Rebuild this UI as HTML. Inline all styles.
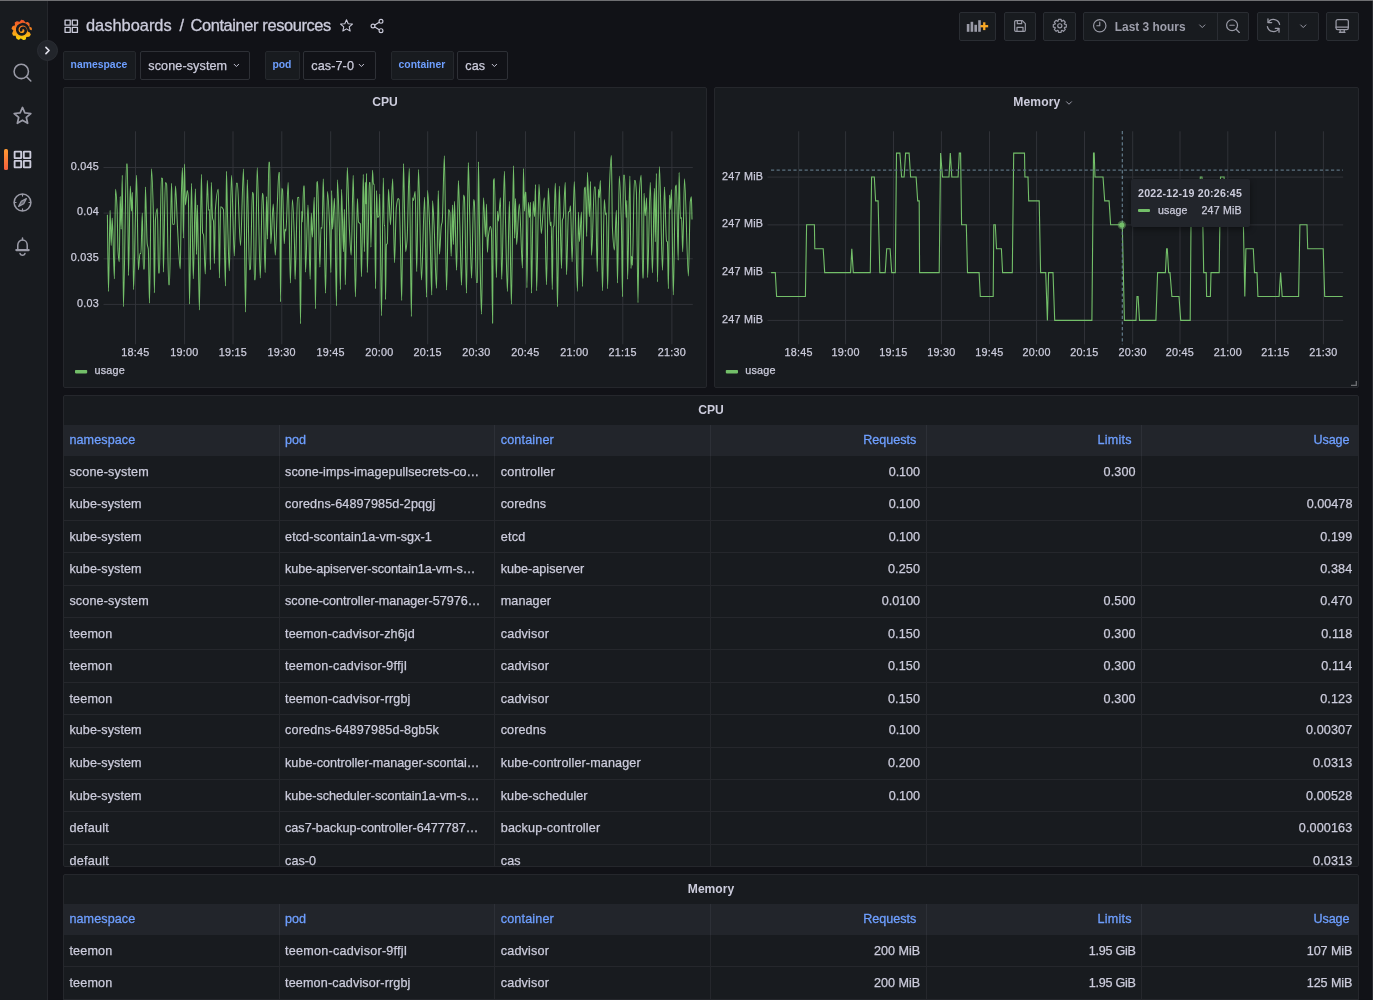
<!DOCTYPE html><html><head><meta charset="utf-8"><title>Container resources - Grafana</title><style>
*{box-sizing:border-box;margin:0;padding:0}
html,body{width:1373px;height:1000px;overflow:hidden;background:#111217;}
body{position:relative;font-family:"Liberation Sans",sans-serif;color:#ccccdc;font-size:12.6px;-webkit-font-smoothing:antialiased}
.abs{position:absolute}
.topline{position:absolute;left:0;top:0;width:1373px;height:1px;background:#6f6f72}
.side{position:absolute;left:0;top:1px;width:48px;height:999px;background:#181b1f;border-right:1px solid #25272c}
.scroll{position:absolute;left:1372px;top:1px;width:1px;height:999px;background:#2a2c31}
.panel{position:absolute;background:#181b1f;border:1px solid #25272c;border-radius:2px;overflow:hidden}
.ptitle{position:absolute;left:0;right:0;top:0;height:29px;line-height:28px;text-align:center;font-weight:700;font-size:12.1px;color:#ccccdc}
.btn{position:absolute;top:12px;height:29px;background:#181b1f;border:1px solid #2a2d33;border-radius:2px}
.vlabel{position:absolute;top:51px;height:29px;background:#181b1f;border:1px solid #25282d;border-radius:2px;color:#6e9fff;font-weight:700;font-size:10.4px;line-height:26px;text-align:center;padding-right:1.2px}
.vval{position:absolute;top:51px;height:29px;background:#111217;border:1px solid #2e3036;border-radius:2px;color:#ccccdc;font-size:12.6px;line-height:28px;padding-left:7.3px;white-space:nowrap;letter-spacing:0.1px;-webkit-text-stroke:0.25px #ccccdc}
.ax{position:absolute;font-size:10.8px;line-height:12px;color:#ccccdc;white-space:nowrap;letter-spacing:0.25px;-webkit-text-stroke:0.25px #ccccdc}
.th{position:absolute;top:0;height:31px;line-height:31px;color:#6e9fff;font-size:12.6px;white-space:nowrap;border-right:1px solid rgba(204,204,220,0.07);padding:0 6px 0 5.4px;letter-spacing:0.12px;-webkit-text-stroke:0.3px #6e9fff}
.td{position:absolute;top:0;height:32.4px;line-height:33.2px;font-size:12.6px;white-space:nowrap;border-right:1px solid #25272c;padding:0 5.6px 0 5.4px;overflow:hidden;letter-spacing:0.13px;-webkit-text-stroke:0.25px #ccccdc}
.tr{position:absolute;left:0;width:1294px;height:32.4px;border-bottom:1px solid #25272c}
.thead{position:absolute;left:0;width:1294px;height:31px;background:#22252b}
.r{text-align:right}
svg{position:absolute;overflow:visible}
</style></head><body>
<div id="root" style="position:absolute;left:0;top:0;width:1373px;height:1000px;will-change:transform">
<div class="topline"></div>
<div class="side"></div>
<div class="scroll"></div>
<svg style="left:11.4px;top:18.2px" width="21.6" height="23" viewBox="0 0 24 24" ><defs><linearGradient id="lg" x1="0" y1="0" x2="0" y2="1"><stop offset="0" stop-color="#f0542a"/><stop offset="0.5" stop-color="#f78b1f"/><stop offset="1" stop-color="#fcd20a"/></linearGradient></defs><path d="M11.69 2.00 L13.76 2.37 L15.73 5.24 L18.55 4.35 L19.90 5.96 L19.57 9.42 L22.30 10.55 L22.30 12.66 L19.82 15.10 L21.18 17.72 L19.83 19.33 L16.36 19.60 L15.72 22.49 L13.65 22.85 L10.82 20.83 L8.47 22.63 L6.65 21.58 L5.78 18.21 L2.83 18.08 L2.11 16.10 L3.61 12.96 L1.43 10.97 L2.15 8.99 L5.32 7.55 L4.93 4.62 L6.75 3.57 L10.10 4.50Z" fill="url(#lg)" stroke="url(#lg)" stroke-width="1.6" stroke-linejoin="round"/><path d="M22.4 14.2L19.7 13.2C19.8 8.6 15.8 5.6 12.2 6.1C8.7 6.6 6.4 9.8 7 13.1C7.5 16 10.3 17.9 13.1 17.3C15.4 16.8 16.8 14.6 16.3 12.5C15.9 10.8 14.2 9.8 12.7 10.3C11.6 10.6 10.9 11.8 11.3 12.9" fill="none" stroke="#181b1f" stroke-width="2.9" stroke-linecap="round" stroke-linejoin="round"/></svg><svg style="left:11.7px;top:62.099999999999994px" width="21" height="21" viewBox="0 0 24 24" ><circle cx="10.6" cy="10.8" r="8.2" fill="none" stroke="#9a9ba7" stroke-width="1.75"/><path d="M16.7 16.9L21.5 21.7" fill="none" stroke="#9a9ba7" stroke-width="1.75" stroke-linecap="round" stroke-linejoin="round"/></svg><svg style="left:11.7px;top:105.1px" width="21" height="21" viewBox="0 0 24 24" ><path d="M12.00 2.80 L14.70 9.08 L21.51 9.71 L16.37 14.22 L17.88 20.89 L12.00 17.40 L6.12 20.89 L7.63 14.22 L2.49 9.71 L9.30 9.08Z" fill="none" stroke="#9a9ba7" stroke-width="1.95" stroke-linecap="round" stroke-linejoin="round"/></svg><svg style="left:11.7px;top:149.1px" width="21" height="21" viewBox="0 0 24 24" ><rect x="3" y="3" width="7.5" height="7.5" rx="0.4" fill="none" stroke="#ccccdc" stroke-width="2.1"/><rect x="13.5" y="3" width="7.5" height="7.5" rx="0.4" fill="none" stroke="#ccccdc" stroke-width="2.1"/><rect x="3" y="13.5" width="7.5" height="7.5" rx="0.4" fill="none" stroke="#ccccdc" stroke-width="2.1"/><rect x="13.5" y="13.5" width="7.5" height="7.5" rx="0.4" fill="none" stroke="#ccccdc" stroke-width="2.1"/></svg><svg style="left:11.7px;top:192.1px" width="21" height="21" viewBox="0 0 24 24" ><circle cx="12" cy="12" r="9.6" fill="none" stroke="#9a9ba7" stroke-width="1.75"/><path d="M16.4 7.6L13.4 13.4L7.6 16.4L10.6 10.6Z" fill="#9a9ba7" fill-opacity="0.55" stroke="#9a9ba7" stroke-width="1.4000000000000001" stroke-linejoin="round"/><path d="M12 3V4.6M12 19.4V21M3 12H4.6M19.4 12H21" fill="none" stroke="#9a9ba7" stroke-width="1.4000000000000001" stroke-linecap="round" stroke-linejoin="round"/></svg><svg style="left:11.7px;top:235.5px" width="21" height="21" viewBox="0 0 24 24" ><path d="M12 2.2V4.4" fill="none" stroke="#9a9ba7" stroke-width="1.75" stroke-linecap="round" stroke-linejoin="round"/><path d="M6.6 15.4V10.6C6.6 7 9 4.6 12 4.6C15 4.6 17.4 7 17.4 10.6V15.4" fill="none" stroke="#9a9ba7" stroke-width="1.75" stroke-linecap="round" stroke-linejoin="round"/><path d="M5 16.1H19" fill="none" stroke="#9a9ba7" stroke-width="2.625" stroke-linecap="round" stroke-linejoin="round"/><path d="M9.2 20C9.6 21.4 10.7 22 12 22C13.3 22 14.4 21.4 14.8 20" fill="none" stroke="#9a9ba7" stroke-width="1.75" stroke-linecap="round" stroke-linejoin="round"/></svg><div class="abs" style="left:4px;top:149px;width:3.6px;height:21px;border-radius:1.5px;background:linear-gradient(#ff9a33,#f55f3e)"></div><div class="abs" style="left:37px;top:40px;width:21px;height:21px;border-radius:50%;background:#22252b;border:1px solid #2b2e34"></div><svg style="left:40px;top:43px" width="15" height="15" viewBox="0 0 24 24" ><path d="M9.5 7L14.5 12L9.5 17" fill="none" stroke="#e0e0ea" stroke-width="2.6" stroke-linecap="round" stroke-linejoin="round"/></svg>
<svg style="left:62.5px;top:17.5px" width="16.5" height="16.5" viewBox="0 0 24 24" ><rect x="3" y="3" width="7.5" height="7.5" rx="0.4" fill="none" stroke="#ccccdc" stroke-width="1.9"/><rect x="13.5" y="3" width="7.5" height="7.5" rx="0.4" fill="none" stroke="#ccccdc" stroke-width="1.9"/><rect x="3" y="13.5" width="7.5" height="7.5" rx="0.4" fill="none" stroke="#ccccdc" stroke-width="1.9"/><rect x="13.5" y="13.5" width="7.5" height="7.5" rx="0.4" fill="none" stroke="#ccccdc" stroke-width="1.9"/></svg><div class="abs" style="left:86px;top:14px;font-size:16.4px;line-height:22px;color:#ccccdc;white-space:nowrap;-webkit-text-stroke:0.3px #ccccdc">dashboards</div><div class="abs" style="left:179.5px;top:14px;font-size:16.4px;line-height:22px;color:#ccccdc;white-space:nowrap;-webkit-text-stroke:0.3px #ccccdc">/</div><div class="abs" style="left:190.5px;top:14px;font-size:16.4px;line-height:22px;color:#ccccdc;white-space:nowrap;-webkit-text-stroke:0.3px #ccccdc;letter-spacing:-0.38px">Container resources</div><svg style="left:338.5px;top:18.2px" width="15" height="15" viewBox="0 0 24 24" ><path d="M12.00 2.80 L14.70 9.08 L21.51 9.71 L16.37 14.22 L17.88 20.89 L12.00 17.40 L6.12 20.89 L7.63 14.22 L2.49 9.71 L9.30 9.08Z" fill="none" stroke="#ccccdc" stroke-width="1.7" stroke-linecap="round" stroke-linejoin="round"/></svg><svg style="left:368.5px;top:18px" width="16" height="16" viewBox="0 0 24 24" ><circle cx="18" cy="5" r="2.9" fill="none" stroke="#ccccdc" stroke-width="1.7"/><circle cx="6" cy="12" r="2.9" fill="none" stroke="#ccccdc" stroke-width="1.7"/><circle cx="18" cy="19" r="2.9" fill="none" stroke="#ccccdc" stroke-width="1.7"/><path d="M8.6 10.5L15.4 6.5M8.6 13.5L15.4 17.5" fill="none" stroke="#ccccdc" stroke-width="1.7" stroke-linecap="round" stroke-linejoin="round"/></svg><div class="btn" style="left:959px;width:37px"></div><div class="btn" style="left:1004px;width:32px"></div><div class="btn" style="left:1043px;width:33px"></div><div class="btn" style="left:1083px;width:166px"></div><div class="btn" style="left:1257px;width:62px"></div><div class="btn" style="left:1326px;width:33px"></div><div class="abs" style="left:1217px;top:12px;width:1px;height:29px;background:#2a2d33"></div><div class="abs" style="left:1288px;top:12px;width:1px;height:29px;background:#2a2d33"></div><svg style="left:0;top:0" width="1373" height="50" viewBox="0 0 1373 50"><rect x="966.8" y="24" width="2.6" height="7.8" fill="#9a9ba7"/><rect x="970.6" y="21.8" width="2.6" height="10.0" fill="#9a9ba7"/><rect x="974.4" y="24.8" width="2.6" height="7.0" fill="#9a9ba7"/><rect x="978.2" y="20.2" width="2.6" height="11.6" fill="#9a9ba7"/><rect x="983.1" y="22.3" width="2.3" height="7.8" fill="#f9a825"/><rect x="980.35" y="25.05" width="7.8" height="2.3" fill="#f9a825"/></svg><svg style="left:1012px;top:18px" width="16" height="16" viewBox="0 0 24 24" ><path d="M4 5.5C4 4.7 4.7 4 5.5 4H15.5L20 8.5V18.5C20 19.3 19.3 20 18.5 20H5.5C4.7 20 4 19.3 4 18.5Z" fill="none" stroke="#9a9ba7" stroke-width="1.8" stroke-linecap="round" stroke-linejoin="round"/><path d="M8 4V8.5H14.5V4" fill="none" stroke="#9a9ba7" stroke-width="1.8" stroke-linecap="round" stroke-linejoin="round"/><path d="M7.5 20V14H16.5V20" fill="none" stroke="#9a9ba7" stroke-width="1.8" stroke-linecap="round" stroke-linejoin="round"/></svg><svg style="left:1052.2px;top:18.2px" width="15.6" height="15.6" viewBox="0 0 24 24" ><path d="M22.00 9.97 L22.00 14.03 L19.16 14.53 L18.86 15.27 L20.50 17.64 L17.64 20.50 L15.27 18.86 L14.53 19.16 L14.03 22.00 L9.97 22.00 L9.47 19.16 L8.73 18.86 L6.36 20.50 L3.50 17.64 L5.14 15.27 L4.84 14.53 L2.00 14.03 L2.00 9.97 L4.84 9.47 L5.14 8.73 L3.50 6.36 L6.36 3.50 L8.73 5.14 L9.47 4.84 L9.97 2.00 L14.03 2.00 L14.53 4.84 L15.27 5.14 L17.64 3.50 L20.50 6.36 L18.86 8.73 L19.16 9.47Z" fill="none" stroke="#9a9ba7" stroke-width="1.8" stroke-linecap="round" stroke-linejoin="round"/><circle cx="12" cy="12" r="3.2" fill="none" stroke="#9a9ba7" stroke-width="1.8"/></svg><svg style="left:1091.5px;top:18.2px" width="15.5" height="15.5" viewBox="0 0 24 24" ><circle cx="12" cy="12" r="9.6" fill="none" stroke="#9a9ba7" stroke-width="1.8"/><path d="M12 6.5V12H7.5" fill="none" stroke="#9a9ba7" stroke-width="1.8" stroke-linecap="round" stroke-linejoin="round"/></svg><div class="abs" style="left:1114.8px;top:13px;height:29px;line-height:29px;font-size:11.9px;font-weight:700;color:#9d9eab;white-space:nowrap">Last 3 hours</div><svg style="left:1196.3px;top:19.6px" width="12.5" height="12.5" viewBox="0 0 24 24" ><path d="M7 9.5L12 14.5L17 9.5" fill="none" stroke="#9a9ba7" stroke-width="1.9" stroke-linecap="round" stroke-linejoin="round"/></svg><svg style="left:1225px;top:17.7px" width="16" height="16" viewBox="0 0 24 24" ><circle cx="10.6" cy="10.8" r="8.2" fill="none" stroke="#9a9ba7" stroke-width="1.8"/><path d="M16.7 16.9L21.5 21.7" fill="none" stroke="#9a9ba7" stroke-width="1.8" stroke-linecap="round" stroke-linejoin="round"/><path d="M7.2 10.8H14" fill="none" stroke="#9a9ba7" stroke-width="1.53" stroke-linecap="round" stroke-linejoin="round"/></svg><svg style="left:1264.6px;top:17.3px" width="17" height="17" viewBox="0 0 24 24" ><path d="M20.6 10.5A8.8 8.8 0 0 0 4.6 7.4" fill="none" stroke="#9a9ba7" stroke-width="1.8" stroke-linecap="round" stroke-linejoin="round"/><path d="M4.2 2.6V7.8H9.4" fill="none" stroke="#9a9ba7" stroke-width="1.8" stroke-linecap="round" stroke-linejoin="round"/><path d="M3.4 13.5A8.8 8.8 0 0 0 19.4 16.6" fill="none" stroke="#9a9ba7" stroke-width="1.8" stroke-linecap="round" stroke-linejoin="round"/><path d="M19.8 21.4V16.2H14.6" fill="none" stroke="#9a9ba7" stroke-width="1.8" stroke-linecap="round" stroke-linejoin="round"/></svg><svg style="left:1297px;top:19.6px" width="12.5" height="12.5" viewBox="0 0 24 24" ><path d="M7 9.5L12 14.5L17 9.5" fill="none" stroke="#9a9ba7" stroke-width="1.9" stroke-linecap="round" stroke-linejoin="round"/></svg><svg style="left:1334.2px;top:17.6px" width="16.4" height="16.4" viewBox="0 0 24 24" ><rect x="3" y="2.5" width="18" height="14.5" rx="2.4" fill="none" stroke="#9a9ba7" stroke-width="1.8"/><path d="M3 13.4H21" fill="none" stroke="#9a9ba7" stroke-width="1.8" stroke-linecap="round" stroke-linejoin="round"/><path d="M9 17.2V20.8H15V17.2M7.8 21H16.2" fill="none" stroke="#9a9ba7" stroke-width="1.8" stroke-linecap="round" stroke-linejoin="round"/></svg>
<div class="vlabel" style="left:63px;width:73px">namespace</div><div class="vval" style="left:140px;width:110px">scone-system</div><svg style="left:230.9px;top:60.1px" width="10.8" height="10.8" viewBox="0 0 24 24" ><path d="M7 9.5L12 14.5L17 9.5" fill="none" stroke="#ccccdc" stroke-width="2.1" stroke-linecap="round" stroke-linejoin="round"/></svg><div class="vlabel" style="left:265px;width:35px">pod</div><div class="vval" style="left:303px;width:73px">cas-7-0</div><svg style="left:356.20000000000005px;top:60.1px" width="10.8" height="10.8" viewBox="0 0 24 24" ><path d="M7 9.5L12 14.5L17 9.5" fill="none" stroke="#ccccdc" stroke-width="2.1" stroke-linecap="round" stroke-linejoin="round"/></svg><div class="vlabel" style="left:391px;width:63px">container</div><div class="vval" style="left:457px;width:51px">cas</div><svg style="left:488.8px;top:60.1px" width="10.8" height="10.8" viewBox="0 0 24 24" ><path d="M7 9.5L12 14.5L17 9.5" fill="none" stroke="#ccccdc" stroke-width="2.1" stroke-linecap="round" stroke-linejoin="round"/></svg>
<div class="panel" style="left:63px;top:87px;width:644px;height:301px"><div class="ptitle">CPU</div><svg style="left:0;top:0" width="642" height="299" viewBox="64 88 642 299"><line x1="103.5" y1="167.5" x2="692.8" y2="167.5" stroke="#33363b" stroke-width="0.9"/><line x1="103.5" y1="213.1" x2="692.8" y2="213.1" stroke="#33363b" stroke-width="0.9"/><line x1="103.5" y1="258.8" x2="692.8" y2="258.8" stroke="#33363b" stroke-width="0.9"/><line x1="103.5" y1="304.4" x2="692.8" y2="304.4" stroke="#33363b" stroke-width="0.9"/><line x1="135.5" y1="131.3" x2="135.5" y2="344.3" stroke="#33363b" stroke-width="0.9"/><line x1="184.6" y1="131.3" x2="184.6" y2="344.3" stroke="#33363b" stroke-width="0.9"/><line x1="233.0" y1="131.3" x2="233.0" y2="344.3" stroke="#33363b" stroke-width="0.9"/><line x1="281.8" y1="131.3" x2="281.8" y2="344.3" stroke="#33363b" stroke-width="0.9"/><line x1="330.70000000000005" y1="131.3" x2="330.70000000000005" y2="344.3" stroke="#33363b" stroke-width="0.9"/><line x1="379.5" y1="131.3" x2="379.5" y2="344.3" stroke="#33363b" stroke-width="0.9"/><line x1="427.70000000000005" y1="131.3" x2="427.70000000000005" y2="344.3" stroke="#33363b" stroke-width="0.9"/><line x1="476.5" y1="131.3" x2="476.5" y2="344.3" stroke="#33363b" stroke-width="0.9"/><line x1="525.5" y1="131.3" x2="525.5" y2="344.3" stroke="#33363b" stroke-width="0.9"/><line x1="574.6" y1="131.3" x2="574.6" y2="344.3" stroke="#33363b" stroke-width="0.9"/><line x1="622.8000000000001" y1="131.3" x2="622.8000000000001" y2="344.3" stroke="#33363b" stroke-width="0.9"/><line x1="671.9" y1="131.3" x2="671.9" y2="344.3" stroke="#33363b" stroke-width="0.9"/><path d="M107.4 214.8C107.7 240.3 108.1 291.4 108.5 291.4C109.0 291.4 109.5 210.3 110.1 210.3C110.4 210.3 110.8 245.4 111.2 245.4C111.5 245.4 111.9 218.1 112.2 218.1C113.0 218.1 113.7 278.8 114.4 278.8C114.8 278.8 115.1 189.3 115.5 189.3C116.0 189.3 116.6 198.2 117.1 209.4C117.4 215.6 117.7 246.3 118.0 250.8C118.4 257.2 118.8 261.7 119.3 261.7C119.6 261.7 119.9 196.5 120.2 196.5C120.5 196.5 120.9 229.2 121.2 229.2C121.6 229.2 122.0 175.2 122.3 175.2C122.7 175.2 123.1 306.7 123.4 306.7C124.4 306.7 125.5 164.0 126.5 164.0C126.8 164.0 127.1 164.0 127.4 164.0C127.7 164.0 128.1 275.5 128.5 275.5C129.1 275.5 129.7 186.0 130.3 186.0C130.7 186.0 131.1 211.2 131.5 211.2C131.8 211.2 132.1 192.3 132.4 192.3C132.8 192.3 133.1 289.6 133.5 289.6C134.2 289.6 134.8 237.2 135.5 213.0C135.8 199.9 136.2 175.2 136.6 175.2C137.2 175.2 137.8 269.8 138.4 269.8C138.9 269.8 139.4 253.5 140.0 253.5C140.3 253.5 140.6 253.5 140.9 253.5C141.4 253.5 141.8 213.0 142.3 213.0C142.7 213.0 143.0 268.9 143.4 268.9C143.8 268.9 144.1 268.9 144.5 268.9C144.8 268.9 145.1 186.9 145.4 186.9C146.0 186.9 146.6 238.8 147.2 243.6C147.5 246.6 147.9 245.9 148.3 249.0C148.7 252.7 149.1 303.1 149.5 303.1C150.2 303.1 150.8 168.9 151.5 168.9C152.2 168.9 152.8 191.3 153.5 218.4C153.8 230.8 154.1 292.8 154.4 292.8C154.7 292.8 155.1 223.3 155.5 219.3C156.1 212.1 156.8 208.5 157.4 208.5C157.8 208.5 158.2 273.0 158.5 273.0C158.8 273.0 159.1 273.0 159.4 273.0C160.1 273.0 160.7 177.9 161.4 177.9C161.8 177.9 162.1 178.2 162.5 178.8C162.8 179.3 163.1 272.1 163.4 272.1C164.0 272.1 164.7 182.4 165.4 182.4C165.8 182.4 166.2 183.1 166.6 184.2C167.3 185.9 168.0 284.7 168.6 284.7C168.9 284.7 169.2 284.7 169.5 284.7C170.2 284.7 170.8 183.3 171.5 183.3C171.9 183.3 172.2 224.2 172.6 224.2C173.2 224.2 173.8 224.2 174.4 224.2C174.7 224.2 175.1 186.0 175.5 186.0C176.1 186.0 176.8 212.4 177.4 225.6C177.8 232.8 178.2 241.7 178.5 247.2C179.1 256.4 179.7 268.9 180.3 268.9C180.7 268.9 181.0 205.8 181.4 193.2C181.8 180.6 182.1 168.0 182.5 168.0C182.8 168.0 183.1 238.2 183.4 238.2C183.7 238.2 184.1 164.0 184.5 164.0C184.8 164.0 185.1 204.9 185.4 204.9C186.0 204.9 186.7 190.5 187.3 190.5C187.7 190.5 188.1 193.6 188.4 198.6C188.8 203.6 189.1 304.0 189.5 304.0C190.2 304.0 190.8 183.3 191.5 183.3C192.1 183.3 192.7 278.8 193.3 278.8C194.0 278.8 194.7 188.7 195.4 188.7C195.8 188.7 196.2 254.4 196.5 254.4C196.8 254.4 197.1 204.9 197.4 204.9C198.1 204.9 198.7 309.9 199.4 309.9C200.1 309.9 200.7 174.3 201.4 174.3C201.8 174.3 202.2 231.3 202.6 232.8C202.9 233.9 203.2 233.6 203.5 234.6C204.1 236.7 204.7 273.9 205.3 273.9C206.0 273.9 206.7 180.3 207.3 180.3C207.7 180.3 208.2 210.3 208.6 210.3C208.9 210.3 209.2 209.4 209.5 209.4C209.8 209.4 210.1 269.8 210.4 269.8C210.7 269.8 211.0 182.4 211.3 182.4C211.7 182.4 212.1 216.2 212.6 218.4C212.9 220.0 213.2 219.4 213.5 221.1C213.8 222.8 214.1 263.5 214.4 263.5C214.7 263.5 215.1 214.4 215.4 209.4C216.4 196.1 217.4 189.3 218.3 189.3C218.7 189.3 219.0 277.9 219.4 277.9C219.8 277.9 220.2 206.7 220.7 206.7C221.6 206.7 222.5 207.6 223.4 209.4C224.1 210.9 224.8 286.0 225.5 286.0C225.8 286.0 226.1 171.2 226.4 171.2C226.8 171.2 227.1 202.1 227.5 214.8C228.1 236.1 228.7 270.7 229.3 270.7C230.0 270.7 230.7 175.2 231.5 175.2C232.4 175.2 233.4 255.9 234.3 255.9C235.0 255.9 235.7 183.3 236.3 183.3C236.7 183.3 237.0 183.3 237.4 183.3C238.4 183.3 239.4 245.4 240.5 245.4C241.5 245.4 242.5 168.9 243.5 168.9C244.2 168.9 244.9 312.1 245.5 312.1C246.1 312.1 246.7 179.7 247.3 179.7C248.1 179.7 248.8 269.8 249.5 269.8C249.8 269.8 250.1 269.4 250.4 268.9C251.1 267.7 251.7 192.3 252.4 192.3C252.7 192.3 253.0 193.0 253.3 194.1C253.6 195.5 254.0 279.7 254.4 279.7C254.7 279.7 255.0 279.7 255.3 279.7C255.9 279.7 256.6 167.5 257.2 167.5C258.3 167.5 259.3 277.9 260.3 277.9C261.0 277.9 261.6 193.2 262.3 193.2C262.5 193.2 262.8 194.0 263.0 195.0C263.7 198.0 264.4 272.5 265.2 272.5C265.6 272.5 266.1 196.5 266.6 196.5C266.9 196.5 267.2 239.1 267.5 239.1C267.9 239.1 268.4 162.2 268.8 162.2C269.1 162.2 269.4 162.2 269.7 162.2C270.0 162.2 270.4 243.6 270.8 243.6C271.6 243.6 272.4 204.0 273.3 204.0C273.9 204.0 274.6 255.3 275.3 255.3C276.0 255.3 276.7 218.3 277.4 202.2C277.9 191.5 278.4 172.5 278.9 172.5C279.1 172.5 279.3 172.5 279.6 172.5C279.9 172.5 280.2 301.8 280.5 301.8C280.9 301.8 281.3 188.2 281.7 188.2C282.0 188.2 282.2 188.8 282.5 189.6C283.1 191.6 283.7 243.6 284.3 243.6C284.5 243.6 284.7 229.2 285.0 229.2C285.3 229.2 285.6 231.0 285.9 231.0C286.7 231.0 287.4 182.4 288.2 182.4C288.9 182.4 289.7 282.9 290.4 282.9C291.0 282.9 291.7 199.5 292.4 199.5C293.1 199.5 293.8 220.1 294.5 245.4C294.7 251.8 294.9 279.3 295.1 279.3C295.9 279.3 296.7 198.3 297.6 197.7C298.1 197.4 298.5 197.2 299.0 197.2C299.5 197.2 300.0 323.8 300.5 323.8C300.9 323.8 301.3 211.2 301.7 211.2C301.9 211.2 302.1 222.0 302.3 222.0C302.7 222.0 303.2 186.0 303.7 186.0C303.9 186.0 304.2 186.0 304.4 186.0C304.8 186.0 305.1 272.1 305.5 272.1C306.3 272.1 307.2 204.9 308.0 204.9C308.7 204.9 309.5 279.3 310.2 279.3C310.6 279.3 310.9 213.0 311.3 213.0C311.6 213.0 312.0 237.3 312.4 237.3C313.0 237.3 313.7 197.2 314.3 197.2C314.7 197.2 315.1 308.8 315.4 308.8C316.0 308.8 316.5 183.9 317.0 182.4C317.2 181.9 317.4 181.5 317.6 181.5C318.4 181.5 319.1 267.1 319.9 267.1C320.3 267.1 320.6 227.4 321.0 227.4C321.4 227.4 321.7 228.3 322.1 228.3C322.5 228.3 322.9 178.8 323.3 178.8C324.1 178.8 324.8 293.2 325.5 293.2C326.2 293.2 326.8 191.4 327.5 191.4C328.2 191.4 328.9 209.1 329.6 225.6C330.1 235.3 330.5 272.5 330.9 272.5C331.1 272.5 331.4 190.5 331.6 190.5C331.9 190.5 332.2 229.2 332.5 229.2C333.2 229.2 333.8 198.3 334.5 198.3C335.2 198.3 335.8 305.8 336.5 305.8C336.8 305.8 337.1 179.7 337.4 179.7C338.0 179.7 338.7 207.1 339.4 231.0C339.7 244.1 340.1 289.6 340.4 289.6C340.8 289.6 341.2 189.3 341.5 189.3C342.2 189.3 342.8 251.7 343.5 251.7C343.8 251.7 344.1 209.4 344.4 209.4C344.7 209.4 345.0 284.7 345.3 284.7C346.0 284.7 346.6 167.5 347.3 167.5C348.0 167.5 348.7 215.5 349.4 229.2C350.0 240.7 350.6 255.3 351.2 255.3C351.9 255.3 352.6 175.2 353.2 175.2C354.0 175.2 354.7 296.8 355.4 296.8C356.1 296.8 356.7 198.6 357.4 198.6C357.7 198.6 358.1 221.3 358.5 222.0C359.1 223.3 359.7 222.6 360.3 223.8C360.7 224.7 361.1 276.6 361.5 276.6C362.1 276.6 362.7 174.3 363.3 174.3C363.7 174.3 364.0 251.7 364.4 251.7C364.7 251.7 365.0 182.4 365.3 182.4C365.5 182.4 365.8 204.0 366.0 204.0C366.2 204.0 366.4 173.4 366.6 173.4C366.8 173.4 367.0 272.5 367.3 272.5C367.6 272.5 368.0 243.9 368.4 227.4C368.7 213.8 369.0 182.4 369.3 182.4C369.6 182.4 369.9 182.4 370.2 182.4C370.4 182.4 370.6 247.2 370.9 247.2C371.4 247.2 372.0 170.2 372.5 170.2C372.8 170.2 373.1 184.2 373.4 184.2C373.7 184.2 374.0 184.2 374.3 184.2C374.7 184.2 375.1 288.7 375.6 288.7C375.9 288.7 376.2 190.5 376.5 190.5C376.8 190.5 377.2 217.5 377.5 217.5C378.0 217.5 378.5 217.0 379.0 215.7C379.2 215.1 379.5 194.1 379.7 194.1C380.3 194.1 380.9 315.7 381.5 315.7C382.1 315.7 382.7 177.9 383.3 177.9C383.6 177.9 383.9 225.6 384.2 225.6C384.4 225.6 384.7 225.6 384.9 225.6C385.1 225.6 385.3 299.5 385.5 299.5C385.8 299.5 386.1 245.1 386.4 244.5C386.7 244.0 387.0 244.2 387.3 243.6C387.7 242.9 388.1 189.3 388.5 189.3C389.2 189.3 389.8 224.7 390.5 224.7C391.2 224.7 391.9 178.8 392.7 178.8C393.3 178.8 393.9 262.6 394.5 262.6C395.1 262.6 395.7 212.8 396.3 207.6C396.9 202.5 397.5 198.6 398.1 198.6C398.4 198.6 398.7 199.0 399.0 199.5C399.5 200.4 400.0 226.1 400.4 243.6C400.9 259.0 401.3 300.4 401.7 300.4C402.3 300.4 402.9 163.5 403.5 163.5C403.9 163.5 404.3 206.0 404.8 222.0C405.1 233.5 405.4 251.7 405.7 251.7C406.1 251.7 406.6 246.1 407.1 240.0C407.8 231.0 408.5 168.4 409.3 168.4C410.0 168.4 410.7 316.6 411.4 316.6C411.8 316.6 412.2 197.7 412.5 197.7C412.8 197.7 413.1 200.4 413.4 200.4C414.0 200.4 414.6 191.4 415.2 191.4C415.7 191.4 416.2 271.6 416.7 271.6C417.3 271.6 417.9 169.4 418.5 169.4C419.5 169.4 420.5 280.0 421.5 280.0C422.5 280.0 423.6 197.2 424.6 197.2C425.2 197.2 425.9 297.3 426.6 297.3C426.9 297.3 427.2 190.5 427.5 190.5C428.3 190.5 429.1 214.2 430.0 233.7C430.6 247.7 431.2 295.0 431.8 295.0C432.0 295.0 432.3 200.8 432.5 200.8C433.0 200.8 433.6 215.3 434.1 225.6C434.9 240.6 435.7 288.3 436.5 288.3C437.1 288.3 437.7 190.5 438.3 190.5C438.7 190.5 439.1 254.1 439.5 254.1C440.1 254.1 440.7 229.2 441.3 225.6C441.6 223.8 441.9 224.0 442.2 222.0C442.9 217.4 443.7 155.8 444.4 155.8C445.1 155.8 445.8 290.1 446.5 290.1C447.2 290.1 447.9 209.4 448.5 209.4C448.9 209.4 449.4 210.5 449.8 212.1C450.3 214.0 450.7 256.2 451.2 256.2C451.6 256.2 452.1 204.9 452.5 204.9C452.8 204.9 453.1 244.5 453.4 244.5C453.7 244.5 454.1 201.3 454.5 201.3C455.2 201.3 455.9 270.3 456.6 270.3C457.2 270.3 457.8 180.6 458.4 180.6C458.9 180.6 459.4 210.3 459.9 226.5C460.4 244.8 461.0 285.1 461.5 285.1C462.2 285.1 462.8 195.0 463.5 195.0C463.8 195.0 464.1 196.0 464.4 197.2C465.1 200.1 465.8 293.2 466.5 293.2C467.1 293.2 467.7 162.6 468.3 162.6C468.8 162.6 469.2 196.0 469.6 211.2C470.3 235.1 470.9 278.2 471.6 278.2C472.2 278.2 472.9 199.5 473.6 199.5C473.8 199.5 474.0 200.3 474.3 201.3C475.0 204.3 475.7 282.4 476.4 282.4C476.8 282.4 477.2 282.4 477.5 282.4C477.8 282.4 478.1 161.7 478.4 161.7C478.8 161.7 479.1 207.9 479.5 226.5C480.2 260.7 480.8 314.2 481.5 314.2C482.1 314.2 482.8 197.7 483.5 197.7C484.1 197.7 484.8 236.8 485.4 236.8C485.8 236.8 486.2 204.0 486.5 204.0C486.8 204.0 487.1 252.3 487.4 252.3C487.8 252.3 488.1 238.4 488.5 235.5C489.1 230.8 489.7 226.5 490.3 226.5C490.7 226.5 491.0 227.9 491.4 230.1C491.8 232.8 492.2 323.2 492.6 323.2C492.9 323.2 493.2 182.0 493.5 180.6C493.8 179.2 494.1 178.5 494.4 178.5C495.1 178.5 495.8 277.5 496.4 277.5C496.8 277.5 497.1 211.2 497.5 211.2C497.8 211.2 498.1 221.1 498.4 221.1C499.1 221.1 499.7 197.7 500.4 197.7C500.8 197.7 501.2 279.3 501.7 279.3C502.6 279.3 503.5 171.2 504.4 171.2C504.7 171.2 505.1 202.2 505.4 216.6C506.1 243.0 506.8 291.4 507.4 291.4C508.1 291.4 508.7 201.3 509.4 201.3C510.1 201.3 510.7 304.3 511.4 304.3C512.1 304.3 512.8 165.8 513.5 165.8C513.9 165.8 514.3 238.2 514.6 238.2C514.9 238.2 515.2 198.6 515.5 198.6C515.9 198.6 516.2 244.5 516.6 244.5C517.5 244.5 518.4 204.0 519.3 204.0C520.4 204.0 521.5 268.0 522.5 268.0C522.8 268.0 523.1 168.5 523.4 168.5C523.8 168.5 524.2 211.2 524.5 211.2C524.8 211.2 525.1 192.3 525.4 192.3C525.7 192.3 525.9 192.3 526.1 192.3C526.4 192.3 526.6 287.8 526.9 287.8C527.3 287.8 527.8 202.2 528.3 202.2C528.7 202.2 529.1 217.5 529.6 217.5C529.9 217.5 530.2 202.2 530.5 202.2C530.8 202.2 531.2 293.2 531.5 293.2C532.1 293.2 532.6 201.3 533.2 201.3C533.6 201.3 534.1 216.6 534.6 216.6C534.9 216.6 535.2 184.6 535.5 184.6C535.9 184.6 536.2 290.8 536.6 290.8C537.4 290.8 538.2 184.2 539.0 184.2C539.7 184.2 540.5 233.7 541.3 233.7C542.3 233.7 543.3 197.7 544.4 197.7C545.1 197.7 545.8 284.7 546.5 284.7C547.1 284.7 547.7 188.2 548.3 188.2C549.0 188.2 549.6 225.6 550.3 225.6C550.6 225.6 550.9 222.0 551.2 222.0C551.6 222.0 551.9 289.6 552.3 289.6C552.6 289.6 552.9 228.8 553.2 227.4C553.4 226.3 553.7 226.6 553.9 225.6C554.4 223.6 554.9 183.3 555.3 183.3C555.8 183.3 556.2 219.5 556.6 243.6C556.9 260.9 557.2 306.7 557.5 306.7C558.1 306.7 558.7 186.0 559.3 186.0C560.0 186.0 560.8 268.5 561.5 268.5C561.8 268.5 562.1 221.9 562.4 220.2C562.7 218.5 563.0 218.9 563.3 217.5C563.9 214.4 564.6 182.4 565.3 182.4C565.7 182.4 566.1 274.6 566.5 274.6C567.2 274.6 567.8 213.1 568.5 212.1C568.9 211.6 569.2 211.8 569.6 211.2C569.9 210.8 570.2 205.8 570.5 205.8C571.0 205.8 571.6 261.7 572.1 261.7C572.8 261.7 573.5 181.5 574.3 181.5C575.3 181.5 576.4 291.4 577.5 291.4C577.8 291.4 578.1 212.1 578.4 212.1C578.8 212.1 579.1 241.8 579.5 241.8C580.1 241.8 580.8 212.1 581.5 212.1C581.8 212.1 582.1 286.5 582.4 286.5C583.1 286.5 583.8 191.2 584.5 188.7C584.8 187.7 585.1 186.9 585.4 186.9C585.8 186.9 586.3 236.4 586.7 236.4C586.9 236.4 587.2 172.5 587.4 172.5C588.1 172.5 588.7 216.6 589.4 216.6C589.7 216.6 590.1 181.5 590.5 181.5C590.8 181.5 591.2 255.3 591.5 255.3C592.5 255.3 593.5 186.9 594.4 186.9C594.7 186.9 595.0 186.9 595.3 186.9C596.0 186.9 596.6 271.6 597.3 271.6C597.7 271.6 598.0 189.3 598.4 189.3C598.7 189.3 599.0 197.7 599.3 197.7C599.6 197.7 600.0 180.6 600.4 180.6C601.1 180.6 601.8 290.8 602.5 290.8C603.1 290.8 603.7 199.5 604.3 199.5C604.8 199.5 605.2 214.8 605.6 214.8C605.9 214.8 606.2 213.0 606.5 213.0C606.9 213.0 607.2 288.7 607.6 288.7C608.2 288.7 608.8 204.3 609.4 188.7C610.0 171.5 610.7 155.4 611.4 155.4C611.7 155.4 612.1 219.9 612.4 227.4C613.1 241.2 613.8 249.9 614.4 249.9C615.1 249.9 615.7 210.3 616.4 210.3C616.8 210.3 617.1 282.9 617.5 282.9C618.1 282.9 618.7 176.1 619.3 176.1C620.0 176.1 620.7 199.8 621.4 225.6C621.8 238.6 622.2 296.8 622.5 296.8C622.8 296.8 623.1 175.2 623.4 175.2C623.8 175.2 624.1 175.2 624.5 175.2C625.0 175.2 625.6 217.5 626.1 217.5C626.4 217.5 626.6 200.4 626.8 200.4C627.1 200.4 627.3 279.3 627.6 279.3C628.3 279.3 629.1 176.1 629.9 176.1C630.3 176.1 630.6 268.5 631.0 268.5C631.2 268.5 631.5 256.2 631.7 256.2C631.9 256.2 632.2 265.3 632.4 265.3C633.1 265.3 633.7 180.6 634.4 180.6C634.7 180.6 635.0 180.6 635.3 180.6C635.7 180.6 636.0 185.9 636.4 192.3C636.9 202.0 637.5 302.7 638.0 302.7C638.5 302.7 639.0 202.0 639.4 193.2C640.0 182.3 640.6 175.2 641.2 175.2C641.7 175.2 642.2 277.9 642.7 277.9C642.9 277.9 643.2 277.9 643.4 277.9C643.6 277.9 643.8 193.2 644.0 193.2C644.4 193.2 644.8 215.7 645.2 215.7C645.7 215.7 646.2 197.7 646.7 197.7C647.0 197.7 647.3 277.5 647.6 277.5C648.5 277.5 649.4 182.4 650.3 182.4C651.0 182.4 651.7 272.8 652.4 272.8C653.1 272.8 653.7 188.2 654.4 188.2C654.7 188.2 655.0 241.8 655.3 241.8C655.7 241.8 656.0 173.4 656.4 173.4C656.7 173.4 657.1 281.8 657.5 281.8C658.1 281.8 658.8 166.6 659.4 166.6C660.5 166.6 661.5 270.3 662.5 270.3C663.2 270.3 663.8 186.9 664.5 186.9C665.1 186.9 665.8 239.8 666.5 240.9C666.8 241.5 667.1 241.3 667.4 241.8C667.7 242.5 668.1 288.7 668.4 288.7C668.8 288.7 669.2 195.0 669.5 195.0C669.8 195.0 670.1 209.4 670.4 209.4C670.8 209.4 671.1 189.6 671.5 189.6C672.1 189.6 672.7 295.0 673.3 295.0C674.0 295.0 674.7 189.4 675.5 186.9C675.8 185.9 676.1 185.1 676.4 185.1C677.0 185.1 677.6 260.2 678.2 260.2C678.5 260.2 678.8 172.5 679.1 172.5C679.5 172.5 680.0 218.4 680.5 218.4C680.9 218.4 681.2 217.5 681.6 217.5C681.9 217.5 682.3 251.7 682.7 251.7C683.3 251.7 683.9 178.8 684.5 178.8C685.8 178.8 687.1 276.0 688.4 276.0C689.0 276.0 689.7 206.2 690.3 201.6C690.7 198.9 691.0 196.8 691.4 196.8C691.6 196.8 691.8 212.0 692.0 219.6" fill="none" stroke="#73bf69" stroke-width="1.05" stroke-linejoin="round"/><rect x="75" y="370" width="12.2" height="3.4" rx="0.8" fill="#73bf69"/></svg><div class="ax r" style="left:-4px;width:39px;top:71.6px">0.045</div><div class="ax r" style="left:-4px;width:39px;top:117.2px">0.04</div><div class="ax r" style="left:-4px;width:39px;top:162.9px">0.035</div><div class="ax r" style="left:-4px;width:39px;top:208.5px">0.03</div><div class="ax" style="left:51.4px;width:40px;text-align:center;top:258px">18:45</div><div class="ax" style="left:100.5px;width:40px;text-align:center;top:258px">19:00</div><div class="ax" style="left:148.9px;width:40px;text-align:center;top:258px">19:15</div><div class="ax" style="left:197.7px;width:40px;text-align:center;top:258px">19:30</div><div class="ax" style="left:246.6px;width:40px;text-align:center;top:258px">19:45</div><div class="ax" style="left:295.4px;width:40px;text-align:center;top:258px">20:00</div><div class="ax" style="left:343.6px;width:40px;text-align:center;top:258px">20:15</div><div class="ax" style="left:392.4px;width:40px;text-align:center;top:258px">20:30</div><div class="ax" style="left:441.4px;width:40px;text-align:center;top:258px">20:45</div><div class="ax" style="left:490.5px;width:40px;text-align:center;top:258px">21:00</div><div class="ax" style="left:538.7px;width:40px;text-align:center;top:258px">21:15</div><div class="ax" style="left:587.8px;width:40px;text-align:center;top:258px">21:30</div><div class="ax" style="left:30.400000000000006px;top:276px">usage</div></div>
<div class="panel" style="left:714px;top:87px;width:645px;height:301px"><div class="ptitle"></div><svg style="left:0;top:0" width="643" height="299" viewBox="715 88 643 299"><line x1="767.5" y1="177.1" x2="1343.2" y2="177.1" stroke="#33363b" stroke-width="0.9"/><line x1="767.5" y1="224.9" x2="1343.2" y2="224.9" stroke="#33363b" stroke-width="0.9"/><line x1="767.5" y1="272.6" x2="1343.2" y2="272.6" stroke="#33363b" stroke-width="0.9"/><line x1="767.5" y1="320.4" x2="1343.2" y2="320.4" stroke="#33363b" stroke-width="0.9"/><line x1="798.7" y1="131.3" x2="798.7" y2="344.3" stroke="#33363b" stroke-width="0.9"/><line x1="845.6" y1="131.3" x2="845.6" y2="344.3" stroke="#33363b" stroke-width="0.9"/><line x1="893.5" y1="131.3" x2="893.5" y2="344.3" stroke="#33363b" stroke-width="0.9"/><line x1="941.4" y1="131.3" x2="941.4" y2="344.3" stroke="#33363b" stroke-width="0.9"/><line x1="989.5" y1="131.3" x2="989.5" y2="344.3" stroke="#33363b" stroke-width="0.9"/><line x1="1036.6" y1="131.3" x2="1036.6" y2="344.3" stroke="#33363b" stroke-width="0.9"/><line x1="1084.5" y1="131.3" x2="1084.5" y2="344.3" stroke="#33363b" stroke-width="0.9"/><line x1="1132.7" y1="131.3" x2="1132.7" y2="344.3" stroke="#33363b" stroke-width="0.9"/><line x1="1180.0" y1="131.3" x2="1180.0" y2="344.3" stroke="#33363b" stroke-width="0.9"/><line x1="1227.8" y1="131.3" x2="1227.8" y2="344.3" stroke="#33363b" stroke-width="0.9"/><line x1="1275.5" y1="131.3" x2="1275.5" y2="344.3" stroke="#33363b" stroke-width="0.9"/><line x1="1323.4" y1="131.3" x2="1323.4" y2="344.3" stroke="#33363b" stroke-width="0.9"/><path d="M771.1 272.6 L775.3 272.6 L776.6 296.5 L805.4 296.5 L806.6 224.8 L814.4 224.8 L814.8 248.7 L823.2 248.7 L824.7 272.6 L850.6 272.6 L851.8 248.7 L853.3 272.6 L870.3 272.6 L871.6 177.0 L874.3 177.0 L875.6 200.9 L878.1 200.9 L879.8 272.6 L885.2 272.6 L886.7 248.7 L890.1 248.7 L891.7 272.6 L895.3 272.6 L896.5 153.1 L899.9 153.1 L901.6 177.0 L904.1 177.0 L905.6 153.1 L909.1 153.1 L910.6 177.0 L916.1 177.0 L917.7 200.9 L919.2 200.9 L919.6 272.6 L939.2 272.6 L940.6 153.1 L942.5 177.0 L949.0 177.0 L950.3 153.1 L951.8 177.0 L958.1 177.0 L959.3 153.1 L960.6 153.1 L961.6 224.8 L966.3 224.8 L967.5 272.6 L979.1 272.6 L980.3 296.5 L993.2 296.5 L993.8 224.8 L995.3 224.8 L996.5 248.7 L1001.4 248.7 L1002.6 272.6 L1012.3 272.6 L1013.7 153.1 L1024.5 153.1 L1024.9 177.0 L1028.0 177.0 L1028.7 200.9 L1039.2 200.9 L1040.6 272.6 L1045.7 272.6 L1047.4 320.4 L1048.6 272.6 L1053.0 272.6 L1054.7 320.4 L1091.9 320.4 L1093.5 153.1 L1094.2 153.1 L1095.0 177.0 L1103.0 177.0 L1104.7 200.9 L1109.1 200.9 L1110.6 224.8 L1122.3 224.8 L1124.4 320.4 L1136.0 320.4 L1137.0 296.5 L1138.1 296.5 L1139.5 320.4 L1155.9 320.4 L1157.6 272.6 L1165.4 272.6 L1166.6 248.7 L1167.3 248.7 L1168.7 272.6 L1170.0 272.6 L1171.9 296.5 L1179.0 296.5 L1180.7 320.4 L1190.2 320.4 L1191.2 200.9 L1199.5 200.9 L1200.3 177.0 L1202.0 177.0 L1203.7 272.6 L1206.2 272.6 L1206.6 296.5 L1210.4 296.5 L1211.0 272.6 L1219.2 272.6 L1220.5 177.0 L1224.1 177.0 L1225.1 224.8 L1243.4 224.8 L1244.8 296.5 L1245.9 248.7 L1253.3 248.7 L1254.5 272.6 L1257.0 272.6 L1257.9 296.5 L1279.1 296.5 L1280.6 272.6 L1282.2 296.5 L1298.6 296.5 L1299.9 224.8 L1307.0 224.8 L1307.7 248.7 L1323.2 248.7 L1324.7 296.5 L1342.7 296.5" fill="none" stroke="#73bf69" stroke-width="1.1" stroke-linejoin="miter"/><line x1="771" y1="170.1" x2="1343" y2="170.1" stroke="#5b7280" stroke-width="1.3" stroke-dasharray="3.2 2.4"/><line x1="1122.3" y1="131" x2="1122.3" y2="344.3" stroke="#6a8494" stroke-width="1.1" stroke-dasharray="3.2 2.4"/><circle cx="1121.8" cy="225" r="4.2" fill="#73bf69" fill-opacity="0.45"/><circle cx="1121.8" cy="225" r="2.6" fill="#73bf69"/><rect x="725.8" y="370" width="12.2" height="3.4" rx="0.8" fill="#73bf69"/><path d="M1356.3 381V385.4H1351" fill="none" stroke="#6e6f73" stroke-width="1.3"/></svg><div class="abs" style="left:298.29999999999995px;top:0;height:29px;line-height:28px;font-weight:700;font-size:12.1px;letter-spacing:0.12px;color:#ccccdc;white-space:nowrap">Memory</div><svg style="left:347.5999999999999px;top:8.799999999999997px" width="12" height="12" viewBox="0 0 24 24" ><path d="M7 9.5L12 14.5L17 9.5" fill="none" stroke="#9d9eab" stroke-width="2.0" stroke-linecap="round" stroke-linejoin="round"/></svg><div class="ax r" style="left:0px;width:48.299999999999955px;top:82px">247 MiB</div><div class="ax r" style="left:0px;width:48.299999999999955px;top:129px">247 MiB</div><div class="ax r" style="left:0px;width:48.299999999999955px;top:177px">247 MiB</div><div class="ax r" style="left:0px;width:48.299999999999955px;top:225px">247 MiB</div><div class="ax" style="left:63.7px;width:40px;text-align:center;top:258px">18:45</div><div class="ax" style="left:110.6px;width:40px;text-align:center;top:258px">19:00</div><div class="ax" style="left:158.5px;width:40px;text-align:center;top:258px">19:15</div><div class="ax" style="left:206.4px;width:40px;text-align:center;top:258px">19:30</div><div class="ax" style="left:254.5px;width:40px;text-align:center;top:258px">19:45</div><div class="ax" style="left:301.6px;width:40px;text-align:center;top:258px">20:00</div><div class="ax" style="left:349.5px;width:40px;text-align:center;top:258px">20:15</div><div class="ax" style="left:397.7px;width:40px;text-align:center;top:258px">20:30</div><div class="ax" style="left:445.0px;width:40px;text-align:center;top:258px">20:45</div><div class="ax" style="left:492.8px;width:40px;text-align:center;top:258px">21:00</div><div class="ax" style="left:540.5px;width:40px;text-align:center;top:258px">21:15</div><div class="ax" style="left:588.4px;width:40px;text-align:center;top:258px">21:30</div><div class="ax" style="left:30.200000000000045px;top:276px">usage</div><div class="abs" style="left:416px;top:91.30000000000001px;width:119px;height:48px;background:#22252b;border-radius:2px;box-shadow:0 2px 6px rgba(0,0,0,.45)"></div><div class="abs" style="left:423px;top:98.5px;font-size:10.6px;font-weight:700;line-height:12px;white-space:nowrap;letter-spacing:0.24px;color:#ccccdc">2022-12-19 20:26:45</div><div class="abs" style="left:423px;top:121px;width:12.4px;height:3.4px;border-radius:1px;background:#73bf69"></div><div class="abs" style="left:443px;top:116px;font-size:10.6px;line-height:12px;white-space:nowrap;letter-spacing:0.15px;-webkit-text-stroke:0.25px #ccccdc;color:#ccccdc">usage</div><div class="abs" style="left:486.5px;top:116px;font-size:10.6px;line-height:12px;white-space:nowrap;letter-spacing:0.22px;-webkit-text-stroke:0.25px #ccccdc;color:#ccccdc">247 MiB</div></div>
<div class="panel" style="left:63px;top:395px;width:1296px;height:472px"><div class="ptitle">CPU</div><div class="abs" style="left:0;top:29px;width:1294px;height:472px"><div class="thead" style="top:0"><div class="th" style="left:0.00px;width:215.67px;letter-spacing:0.088px;">namespace</div><div class="th" style="left:215.67px;width:215.66px;letter-spacing:-0.005px;">pod</div><div class="th" style="left:431.33px;width:215.67px;letter-spacing:0.154px;">container</div><div class="th r" style="left:647.00px;width:215.67px;padding-right:9.5px;letter-spacing:-0.040px;">Requests</div><div class="th r" style="left:862.67px;width:215.66px;padding-right:9.5px;letter-spacing:0.235px;">Limits</div><div class="th r" style="left:1078.33px;width:215.67px;padding-right:8.6px;border-right:none;letter-spacing:-0.121px;">Usage</div></div><div class="tr" style="top:31.0px"><div class="td" style="left:0.00px;width:215.67px;letter-spacing:0.151px;">scone-system</div><div class="td" style="left:215.67px;width:215.66px;letter-spacing:0.033px;">scone-imps-imagepullsecrets-co…</div><div class="td" style="left:431.33px;width:215.67px;letter-spacing:0.240px;">controller</div><div class="td r" style="left:647.00px;width:215.67px;letter-spacing:-0.023px;">0.100</div><div class="td r" style="left:862.67px;width:215.66px;">0.300</div><div class="td r" style="left:1078.33px;width:215.67px;border-right:none;"></div></div><div class="tr" style="top:63.4px"><div class="td" style="left:0.00px;width:215.67px;letter-spacing:0.074px;">kube-system</div><div class="td" style="left:215.67px;width:215.66px;letter-spacing:0.141px;">coredns-64897985d-2pqgj</div><div class="td" style="left:431.33px;width:215.67px;letter-spacing:0.098px;">coredns</div><div class="td r" style="left:647.00px;width:215.67px;letter-spacing:-0.023px;">0.100</div><div class="td r" style="left:862.67px;width:215.66px;"></div><div class="td r" style="left:1078.33px;width:215.67px;border-right:none;letter-spacing:0.010px;">0.00478</div></div><div class="tr" style="top:95.8px"><div class="td" style="left:0.00px;width:215.67px;letter-spacing:0.074px;">kube-system</div><div class="td" style="left:215.67px;width:215.66px;letter-spacing:0.084px;">etcd-scontain1a-vm-sgx-1</div><div class="td" style="left:431.33px;width:215.67px;letter-spacing:0.272px;">etcd</div><div class="td r" style="left:647.00px;width:215.67px;letter-spacing:-0.023px;">0.100</div><div class="td r" style="left:862.67px;width:215.66px;"></div><div class="td r" style="left:1078.33px;width:215.67px;border-right:none;">0.199</div></div><div class="tr" style="top:128.2px"><div class="td" style="left:0.00px;width:215.67px;letter-spacing:0.074px;">kube-system</div><div class="td" style="left:215.67px;width:215.66px;letter-spacing:-0.070px;">kube-apiserver-scontain1a-vm-s…</div><div class="td" style="left:431.33px;width:215.67px;letter-spacing:0.013px;">kube-apiserver</div><div class="td r" style="left:647.00px;width:215.67px;">0.250</div><div class="td r" style="left:862.67px;width:215.66px;"></div><div class="td r" style="left:1078.33px;width:215.67px;border-right:none;">0.384</div></div><div class="tr" style="top:160.6px"><div class="td" style="left:0.00px;width:215.67px;line-height:31.2px;letter-spacing:0.151px;">scone-system</div><div class="td" style="left:215.67px;width:215.66px;line-height:31.2px;letter-spacing:-0.004px;">scone-controller-manager-57976…</div><div class="td" style="left:431.33px;width:215.67px;line-height:31.2px;letter-spacing:0.083px;">manager</div><div class="td r" style="left:647.00px;width:215.67px;line-height:31.2px;letter-spacing:-0.055px;">0.0100</div><div class="td r" style="left:862.67px;width:215.66px;line-height:31.2px;">0.500</div><div class="td r" style="left:1078.33px;width:215.67px;border-right:none;line-height:31.2px;">0.470</div></div><div class="tr" style="top:193.0px"><div class="td" style="left:0.00px;width:215.67px;letter-spacing:0.164px;">teemon</div><div class="td" style="left:215.67px;width:215.66px;letter-spacing:0.114px;">teemon-cadvisor-zh6jd</div><div class="td" style="left:431.33px;width:215.67px;letter-spacing:0.187px;">cadvisor</div><div class="td r" style="left:647.00px;width:215.67px;">0.150</div><div class="td r" style="left:862.67px;width:215.66px;">0.300</div><div class="td r" style="left:1078.33px;width:215.67px;border-right:none;">0.118</div></div><div class="tr" style="top:225.4px"><div class="td" style="left:0.00px;width:215.67px;letter-spacing:0.164px;">teemon</div><div class="td" style="left:215.67px;width:215.66px;letter-spacing:0.249px;">teemon-cadvisor-9ffjl</div><div class="td" style="left:431.33px;width:215.67px;letter-spacing:0.187px;">cadvisor</div><div class="td r" style="left:647.00px;width:215.67px;">0.150</div><div class="td r" style="left:862.67px;width:215.66px;">0.300</div><div class="td r" style="left:1078.33px;width:215.67px;border-right:none;">0.114</div></div><div class="tr" style="top:257.8px"><div class="td" style="left:0.00px;width:215.67px;letter-spacing:0.164px;">teemon</div><div class="td" style="left:215.67px;width:215.66px;letter-spacing:0.144px;">teemon-cadvisor-rrgbj</div><div class="td" style="left:431.33px;width:215.67px;letter-spacing:0.187px;">cadvisor</div><div class="td r" style="left:647.00px;width:215.67px;">0.150</div><div class="td r" style="left:862.67px;width:215.66px;">0.300</div><div class="td r" style="left:1078.33px;width:215.67px;border-right:none;">0.123</div></div><div class="tr" style="top:290.2px"><div class="td" style="left:0.00px;width:215.67px;line-height:31.2px;letter-spacing:0.074px;">kube-system</div><div class="td" style="left:215.67px;width:215.66px;line-height:31.2px;letter-spacing:0.150px;">coredns-64897985d-8gb5k</div><div class="td" style="left:431.33px;width:215.67px;line-height:31.2px;letter-spacing:0.098px;">coredns</div><div class="td r" style="left:647.00px;width:215.67px;line-height:31.2px;letter-spacing:-0.023px;">0.100</div><div class="td r" style="left:862.67px;width:215.66px;line-height:31.2px;"></div><div class="td r" style="left:1078.33px;width:215.67px;border-right:none;line-height:31.2px;">0.00307</div></div><div class="tr" style="top:322.6px"><div class="td" style="left:0.00px;width:215.67px;line-height:31.2px;letter-spacing:0.074px;">kube-system</div><div class="td" style="left:215.67px;width:215.66px;line-height:31.2px;letter-spacing:0.016px;">kube-controller-manager-scontai…</div><div class="td" style="left:431.33px;width:215.67px;line-height:31.2px;letter-spacing:0.122px;">kube-controller-manager</div><div class="td r" style="left:647.00px;width:215.67px;line-height:31.2px;">0.200</div><div class="td r" style="left:862.67px;width:215.66px;line-height:31.2px;"></div><div class="td r" style="left:1078.33px;width:215.67px;border-right:none;line-height:31.2px;">0.0313</div></div><div class="tr" style="top:355.0px"><div class="td" style="left:0.00px;width:215.67px;letter-spacing:0.074px;">kube-system</div><div class="td" style="left:215.67px;width:215.66px;letter-spacing:-0.029px;">kube-scheduler-scontain1a-vm-s…</div><div class="td" style="left:431.33px;width:215.67px;letter-spacing:0.056px;">kube-scheduler</div><div class="td r" style="left:647.00px;width:215.67px;letter-spacing:-0.023px;">0.100</div><div class="td r" style="left:862.67px;width:215.66px;"></div><div class="td r" style="left:1078.33px;width:215.67px;border-right:none;">0.00528</div></div><div class="tr" style="top:387.4px"><div class="td" style="left:0.00px;width:215.67px;letter-spacing:0.270px;">default</div><div class="td" style="left:215.67px;width:215.66px;letter-spacing:0.006px;">cas7-backup-controller-6477787…</div><div class="td" style="left:431.33px;width:215.67px;letter-spacing:0.176px;">backup-controller</div><div class="td r" style="left:647.00px;width:215.67px;"></div><div class="td r" style="left:862.67px;width:215.66px;"></div><div class="td r" style="left:1078.33px;width:215.67px;border-right:none;">0.000163</div></div><div class="tr" style="top:419.8px"><div class="td" style="left:0.00px;width:215.67px;letter-spacing:0.270px;">default</div><div class="td" style="left:215.67px;width:215.66px;letter-spacing:0.061px;">cas-0</div><div class="td" style="left:431.33px;width:215.67px;letter-spacing:0.130px;">cas</div><div class="td r" style="left:647.00px;width:215.67px;"></div><div class="td r" style="left:862.67px;width:215.66px;"></div><div class="td r" style="left:1078.33px;width:215.67px;border-right:none;">0.0313</div></div></div></div>
<div class="panel" style="left:63px;top:874px;width:1296px;height:200px"><div class="ptitle">Memory</div><div class="abs" style="left:0;top:29px;width:1294px;height:200px"><div class="thead" style="top:0"><div class="th" style="left:0.00px;width:215.67px;letter-spacing:0.088px;">namespace</div><div class="th" style="left:215.67px;width:215.66px;letter-spacing:-0.005px;">pod</div><div class="th" style="left:431.33px;width:215.67px;letter-spacing:0.154px;">container</div><div class="th r" style="left:647.00px;width:215.67px;padding-right:9.5px;letter-spacing:-0.040px;">Requests</div><div class="th r" style="left:862.67px;width:215.66px;padding-right:9.5px;letter-spacing:0.235px;">Limits</div><div class="th r" style="left:1078.33px;width:215.67px;padding-right:8.6px;border-right:none;letter-spacing:-0.121px;">Usage</div></div><div class="tr" style="top:31.0px"><div class="td" style="left:0.00px;width:215.67px;letter-spacing:0.164px;">teemon</div><div class="td" style="left:215.67px;width:215.66px;letter-spacing:0.249px;">teemon-cadvisor-9ffjl</div><div class="td" style="left:431.33px;width:215.67px;letter-spacing:0.187px;">cadvisor</div><div class="td r" style="left:647.00px;width:215.67px;letter-spacing:-0.029px;">200 MiB</div><div class="td r" style="left:862.67px;width:215.66px;letter-spacing:-0.252px;">1.95 GiB</div><div class="td r" style="left:1078.33px;width:215.67px;border-right:none;letter-spacing:-0.086px;">107 MiB</div></div><div class="tr" style="top:63.4px"><div class="td" style="left:0.00px;width:215.67px;letter-spacing:0.164px;">teemon</div><div class="td" style="left:215.67px;width:215.66px;letter-spacing:0.144px;">teemon-cadvisor-rrgbj</div><div class="td" style="left:431.33px;width:215.67px;letter-spacing:0.187px;">cadvisor</div><div class="td r" style="left:647.00px;width:215.67px;letter-spacing:-0.029px;">200 MiB</div><div class="td r" style="left:862.67px;width:215.66px;letter-spacing:-0.252px;">1.95 GiB</div><div class="td r" style="left:1078.33px;width:215.67px;border-right:none;letter-spacing:-0.086px;">125 MiB</div></div><div class="tr" style="top:95.8px"><div class="td" style="left:0.00px;width:215.67px;letter-spacing:0.164px;">teemon</div><div class="td" style="left:215.67px;width:215.66px;letter-spacing:0.114px;">teemon-cadvisor-zh6jd</div><div class="td" style="left:431.33px;width:215.67px;letter-spacing:0.187px;">cadvisor</div><div class="td r" style="left:647.00px;width:215.67px;letter-spacing:-0.029px;">200 MiB</div><div class="td r" style="left:862.67px;width:215.66px;letter-spacing:-0.252px;">1.95 GiB</div><div class="td r" style="left:1078.33px;width:215.67px;border-right:none;">118 MiB</div></div></div></div>
</div></body></html>
